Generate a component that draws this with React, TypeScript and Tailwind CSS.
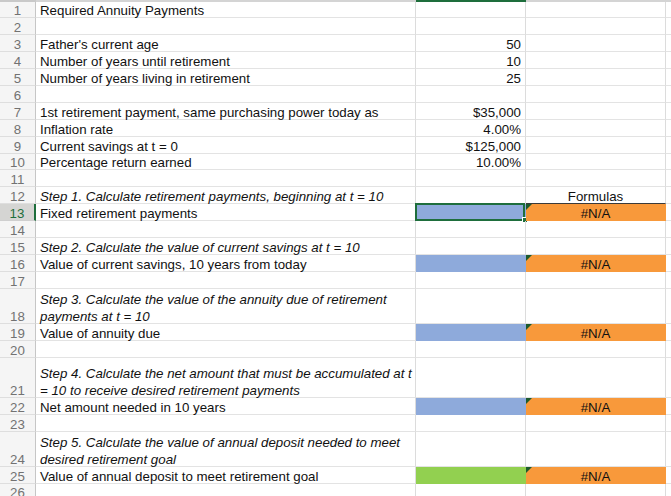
import type { ReactNode } from 'react';

type Fill = 'blue' | 'green';

interface Row {
  n: number;
  a?: string | string[];
  b?: string;
  c?: string;
  italic?: boolean;
  fill?: Fill;
  error?: boolean;
  selected?: boolean;
  underline?: boolean;
  h?: string;
}

const rows: Row[] = [
  { n: 1, a: 'Required Annuity Payments' },
  { n: 2 },
  { n: 3, a: "Father's current age", b: '50' },
  { n: 4, a: 'Number of years until retirement', b: '10' },
  { n: 5, a: 'Number of years living in retirement', b: '25' },
  { n: 6 },
  { n: 7, a: '1st retirement payment, same purchasing power today as', b: '$35,000' },
  { n: 8, a: 'Inflation rate', b: '4.00%' },
  { n: 9, a: 'Current savings at t = 0', b: '$125,000' },
  { n: 10, a: 'Percentage return earned', b: '10.00%' },
  { n: 11 },
  { n: 12, a: 'Step 1. Calculate retirement payments, beginning at t = 10', italic: true, c: 'Formulas', underline: true },
  { n: 13, a: 'Fixed retirement payments', fill: 'blue', c: '#N/A', error: true, selected: true },
  { n: 14 },
  { n: 15, a: 'Step 2. Calculate the value of current savings at t = 10', italic: true },
  { n: 16, a: 'Value of current savings, 10 years from today', fill: 'blue', c: '#N/A', error: true },
  { n: 17 },
  {
    n: 18,
    a: ['Step 3. Calculate the value of the annuity due of retirement', 'payments at t = 10'],
    italic: true,
    h: 'h-[35.5px]'
  },
  { n: 19, a: 'Value of annuity due', fill: 'blue', c: '#N/A', error: true },
  { n: 20 },
  {
    n: 21,
    a: ['Step 4. Calculate the net amount that must be accumulated at t', '= 10 to receive desired retirement payments'],
    italic: true,
    h: 'h-[40px]'
  },
  { n: 22, a: 'Net amount needed in 10 years', fill: 'blue', c: '#N/A', error: true },
  { n: 23 },
  {
    n: 24,
    a: ['Step 5. Calculate the value of annual deposit needed to meet', 'desired retirement goal'],
    italic: true,
    h: 'h-[35px]'
  },
  { n: 25, a: 'Value of annual deposit to meet retirement goal', fill: 'green', c: '#N/A', error: true },
  { n: 26 }
];

export default function App() {
  return (
    <div className="h-[496px] w-[671px] overflow-hidden bg-white font-['Liberation_Sans',Arial,sans-serif] text-[13.3px] text-[#111]">
      <div className="flex h-[1.5px]">
        <div className="w-9 bg-[#c9c9c9]" />
        <div className="w-[380px] bg-[#d4d4d4]" />
        <div className="w-[110px] bg-[#1e6e3c]" />
        <div className="flex-1 bg-[#d4d4d4]" />
      </div>
      {rows.map((row) => (
        <SheetRow key={row.n} row={row} />
      ))}
    </div>
  );
}

function SheetRow({ row }: { row: Row }) {
  const height = row.h ?? 'h-[16.9px]';

  return (
    <div className={`flex ${height}`}>
      <div
        className={`flex w-9 shrink-0 items-end justify-center border-b border-r leading-[17px] ${
          row.selected
            ? 'border-b-[#cfcfcf] border-r-2 border-r-[#1e6e3c] bg-[#d5d5d3] text-[#1e6e3c]'
            : 'border-b-[#dedede] border-r-[#c6c6c6] bg-[#f5f5f5] text-[#727272]'
        }`}
      >
        <span className="translate-y-[1.5px]">{row.n}</span>
      </div>

      <Cell className="w-[380px] pl-[4px]">
        {row.a ? (
          <span className={`translate-y-[1.5px] whitespace-nowrap ${row.italic ? 'italic' : ''}`}>
            {Array.isArray(row.a) ? (
              <>
                {row.a[0]}
                <br />
                {row.a[1]}
              </>
            ) : (
              row.a
            )}
          </span>
        ) : null}
      </Cell>

      <div
        className={`relative flex w-[110px] shrink-0 items-end justify-end border-b border-r pr-[4px] leading-[17px] ${
          row.fill === 'blue'
            ? 'border-transparent bg-[#8eaadb]'
            : row.fill === 'green'
              ? 'border-transparent bg-[#92d050]'
              : 'border-b-[#e3e3e3] border-r-[#dcdcdc]'
        }`}
      >
        {row.b ? <span className="translate-y-[1.5px]">{row.b}</span> : null}
        {row.selected ? (
          <>
            <div className="absolute -left-[1px] -top-[1px] h-[calc(100%+2px)] w-[calc(100%+1px)] border-2 border-[#1e6e3c]" />
            <div className="absolute -bottom-[3px] -right-[3px] h-[6px] w-[6px] border border-white bg-[#1e6e3c]" />
          </>
        ) : null}
      </div>

      <div
        className={`relative flex w-[140px] shrink-0 items-end justify-center border-b border-r leading-[17px] ${
          row.error
            ? 'border-transparent bg-[#f8993b]'
            : row.underline
              ? 'border-b-[#3a3a3a] border-r-[#dcdcdc]'
              : 'border-b-[#e3e3e3] border-r-[#dcdcdc]'
        }`}
      >
        {row.error ? (
          <svg className="absolute left-0 top-0" width="6" height="6" viewBox="0 0 6 6">
            <polygon points="0,0 6,0 0,6" fill="#1d5a2c" />
          </svg>
        ) : null}
        {row.c ? <span className="translate-y-[1.5px]">{row.c}</span> : null}
      </div>

      <div className="flex-1 border-b border-b-[#e3e3e3]" />
    </div>
  );
}

function Cell({ className, children }: { className: string; children: ReactNode }) {
  return (
    <div
      className={`flex shrink-0 items-end border-b border-r border-b-[#e3e3e3] border-r-[#dcdcdc] leading-[17px] ${className}`}
    >
      {children}
    </div>
  );
}
